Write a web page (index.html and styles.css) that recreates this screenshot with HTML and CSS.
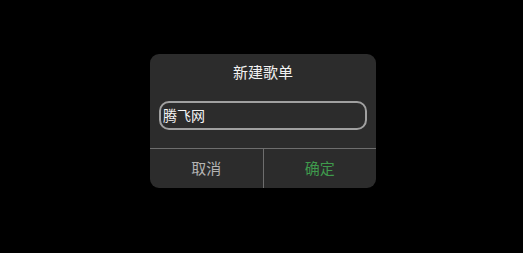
FILE: index.html
```html
<!DOCTYPE html>
<html>
<head>
<meta charset="utf-8">
<link rel="stylesheet" href="styles.css">
</head>
<body>
<div class="screen">
  <div class="dialog">
    <div class="title">新建歌单</div>
    <div class="field"><span class="value">腾飞网</span></div>
    <div class="actions">
      <div class="btn cancel">取消</div>
      <div class="btn ok">确定</div>
    </div>
  </div>
</div>
</body>
</html>
```
FILE: styles.css
```css
html, body {
  margin: 0;
  padding: 0;
  background: #000;
}
.screen {
  width: 523px;
  height: 253px;
  display: flex;
  justify-content: center;
  align-items: flex-start;
  font-family: "Noto Sans CJK SC", "DejaVu Sans", sans-serif;
}
.dialog {
  margin-top: 54px;
  margin-left: 3px;
  width: 226px;
  height: 134px;
  background: #2c2c2c;
  border-radius: 9px;
  display: flex;
  flex-direction: column;
  overflow: hidden;
}
.title {
  height: 36px;
  line-height: 36px;
  text-align: center;
  color: #f2f2f2;
  font-size: 15px;
}
.field {
  margin: 11px 9px 0 9px;
  height: 25px;
  border: 2px solid #a0a0a0;
  border-radius: 10px;
  display: flex;
  align-items: center;
  padding-left: 2px;
}
.value {
  color: #f4f4f4;
  font-size: 14px;
  line-height: 1;
  padding-bottom: 2px;
}
.actions {
  margin-top: 18px;
  border-top: 1px solid #6e6e6e;
  flex: 1;
  display: flex;
}
.btn {
  flex: 1;
  display: flex;
  align-items: center;
  justify-content: center;
  font-size: 15px;
  padding-bottom: 3px;
}
.cancel {
  color: #b4b4b4;
  border-right: 1px solid #6e6e6e;
}
.ok {
  color: #3f9a4c;
}
```
